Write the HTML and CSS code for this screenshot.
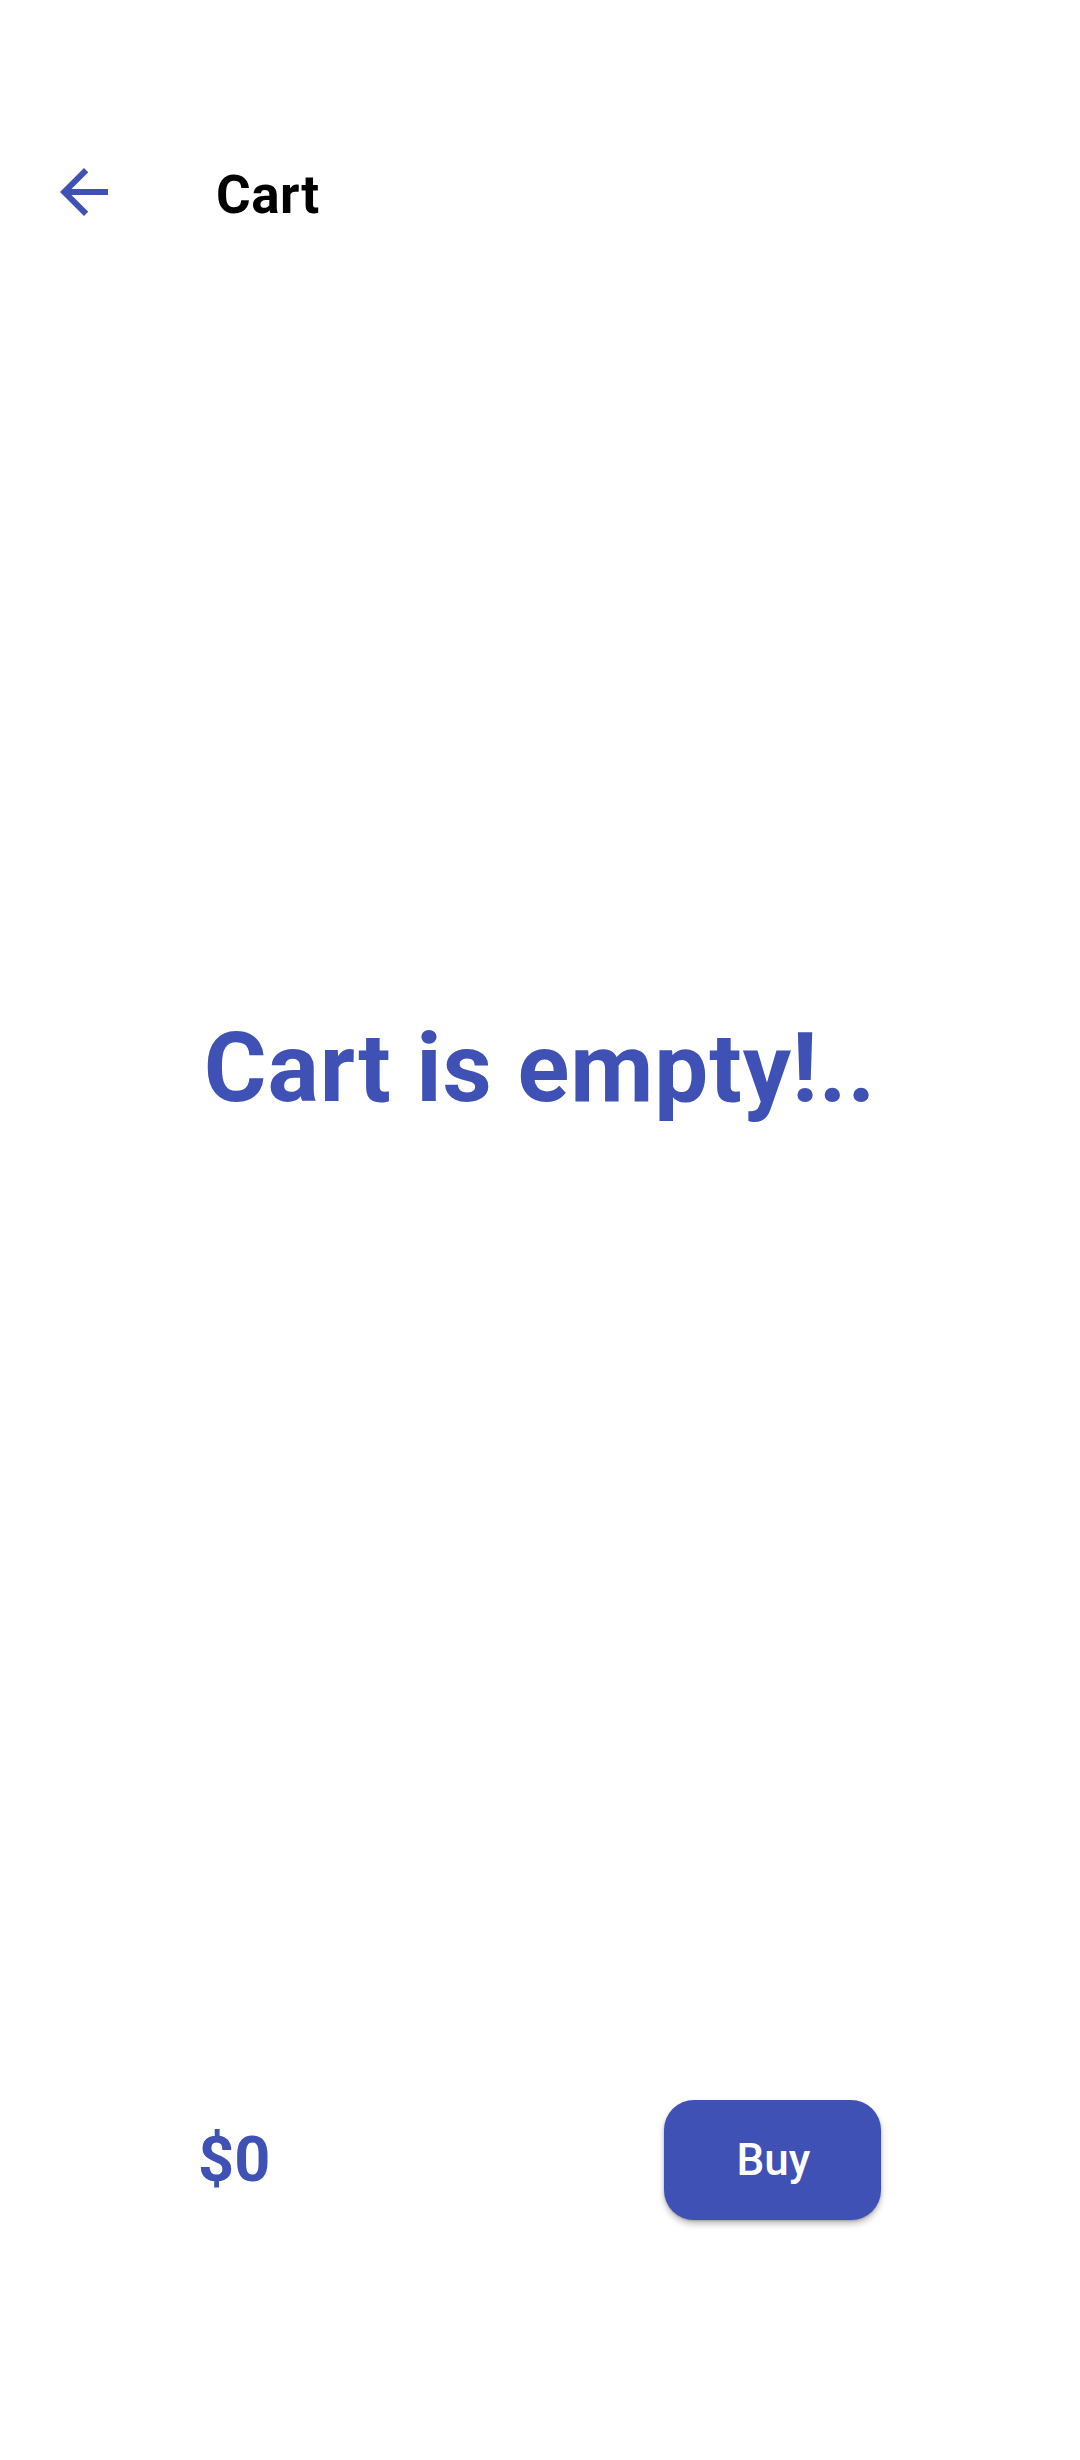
FILE: index.html
```html
<!DOCTYPE html>
<html lang="en">
<head>
<meta charset="utf-8">
<title>Cart</title>
<link rel="stylesheet" href="styles.css">
</head>
<body>
<div class="screen">
  <header class="toolbar">
    <button class="back" aria-label="Back">
      <svg viewBox="4 4 16 16" width="48" height="48"><path d="M20 11H7.83l5.59-5.59L12 4l-8 8 8 8 1.41-1.41L7.83 13H20v-2z" fill="#3F51B5"/></svg>
    </button>
    <h1 class="title">Cart</h1>
  </header>
  <main class="content">
    <p class="empty">Cart is empty!..</p>
  </main>
  <footer class="checkout">
    <span class="total">$0</span>
    <button class="buy">Buy</button>
  </footer>
</div>
</body>
</html>
```

FILE: styles.css
```css
* { box-sizing: border-box; }
html, body { margin: 0; padding: 0; background: #ffffff; }
body { font-family: Roboto, "Noto Sans", sans-serif; }
.screen {
  width: 1080px;
  height: 2460px;
  display: flex;
  flex-direction: column;
}
.toolbar {
  display: flex;
  align-items: flex-start;
  padding: 156px 0 0 48px;
  height: 228px;
}
.back {
  width: 72px;
  height: 72px;
  padding: 0;
  border: 0;
  background: none;
  display: flex;
  align-items: center;
  justify-content: center;
}
.title {
  margin: 8px 0 0 96px;
  font-size: 53px;
  line-height: 1.17;
  font-weight: 700;
  letter-spacing: 0.5px;
  color: #000;
}
.content {
  flex: 1;
  padding-top: 784px;
}
.empty {
  margin: 0;
  text-align: center;
  font-size: 96px;
  line-height: 1.17;
  font-weight: 700;
  letter-spacing: 0.9px;
  color: #3F51B5;
}
.checkout {
  display: flex;
  align-items: center;
  justify-content: space-between;
  height: 120px;
  margin-bottom: 240px;
  padding: 0 199px 0 198px;
}
.total {
  font-size: 63px;
  line-height: 1.17;
  font-weight: 700;
  color: #3F51B5;
}
.buy {
  width: 217px;
  height: 120px;
  border: 0;
  border-radius: 30px;
  background: #3F51B5;
  color: #fff;
  font-family: Roboto, "Noto Sans", sans-serif;
  font-size: 44px;
  font-weight: 500;
  padding: 0 0 0 2px;
  box-shadow: 0 4px 6px rgba(0,0,0,0.25), 0 1px 2px rgba(0,0,0,0.2);
}
```
